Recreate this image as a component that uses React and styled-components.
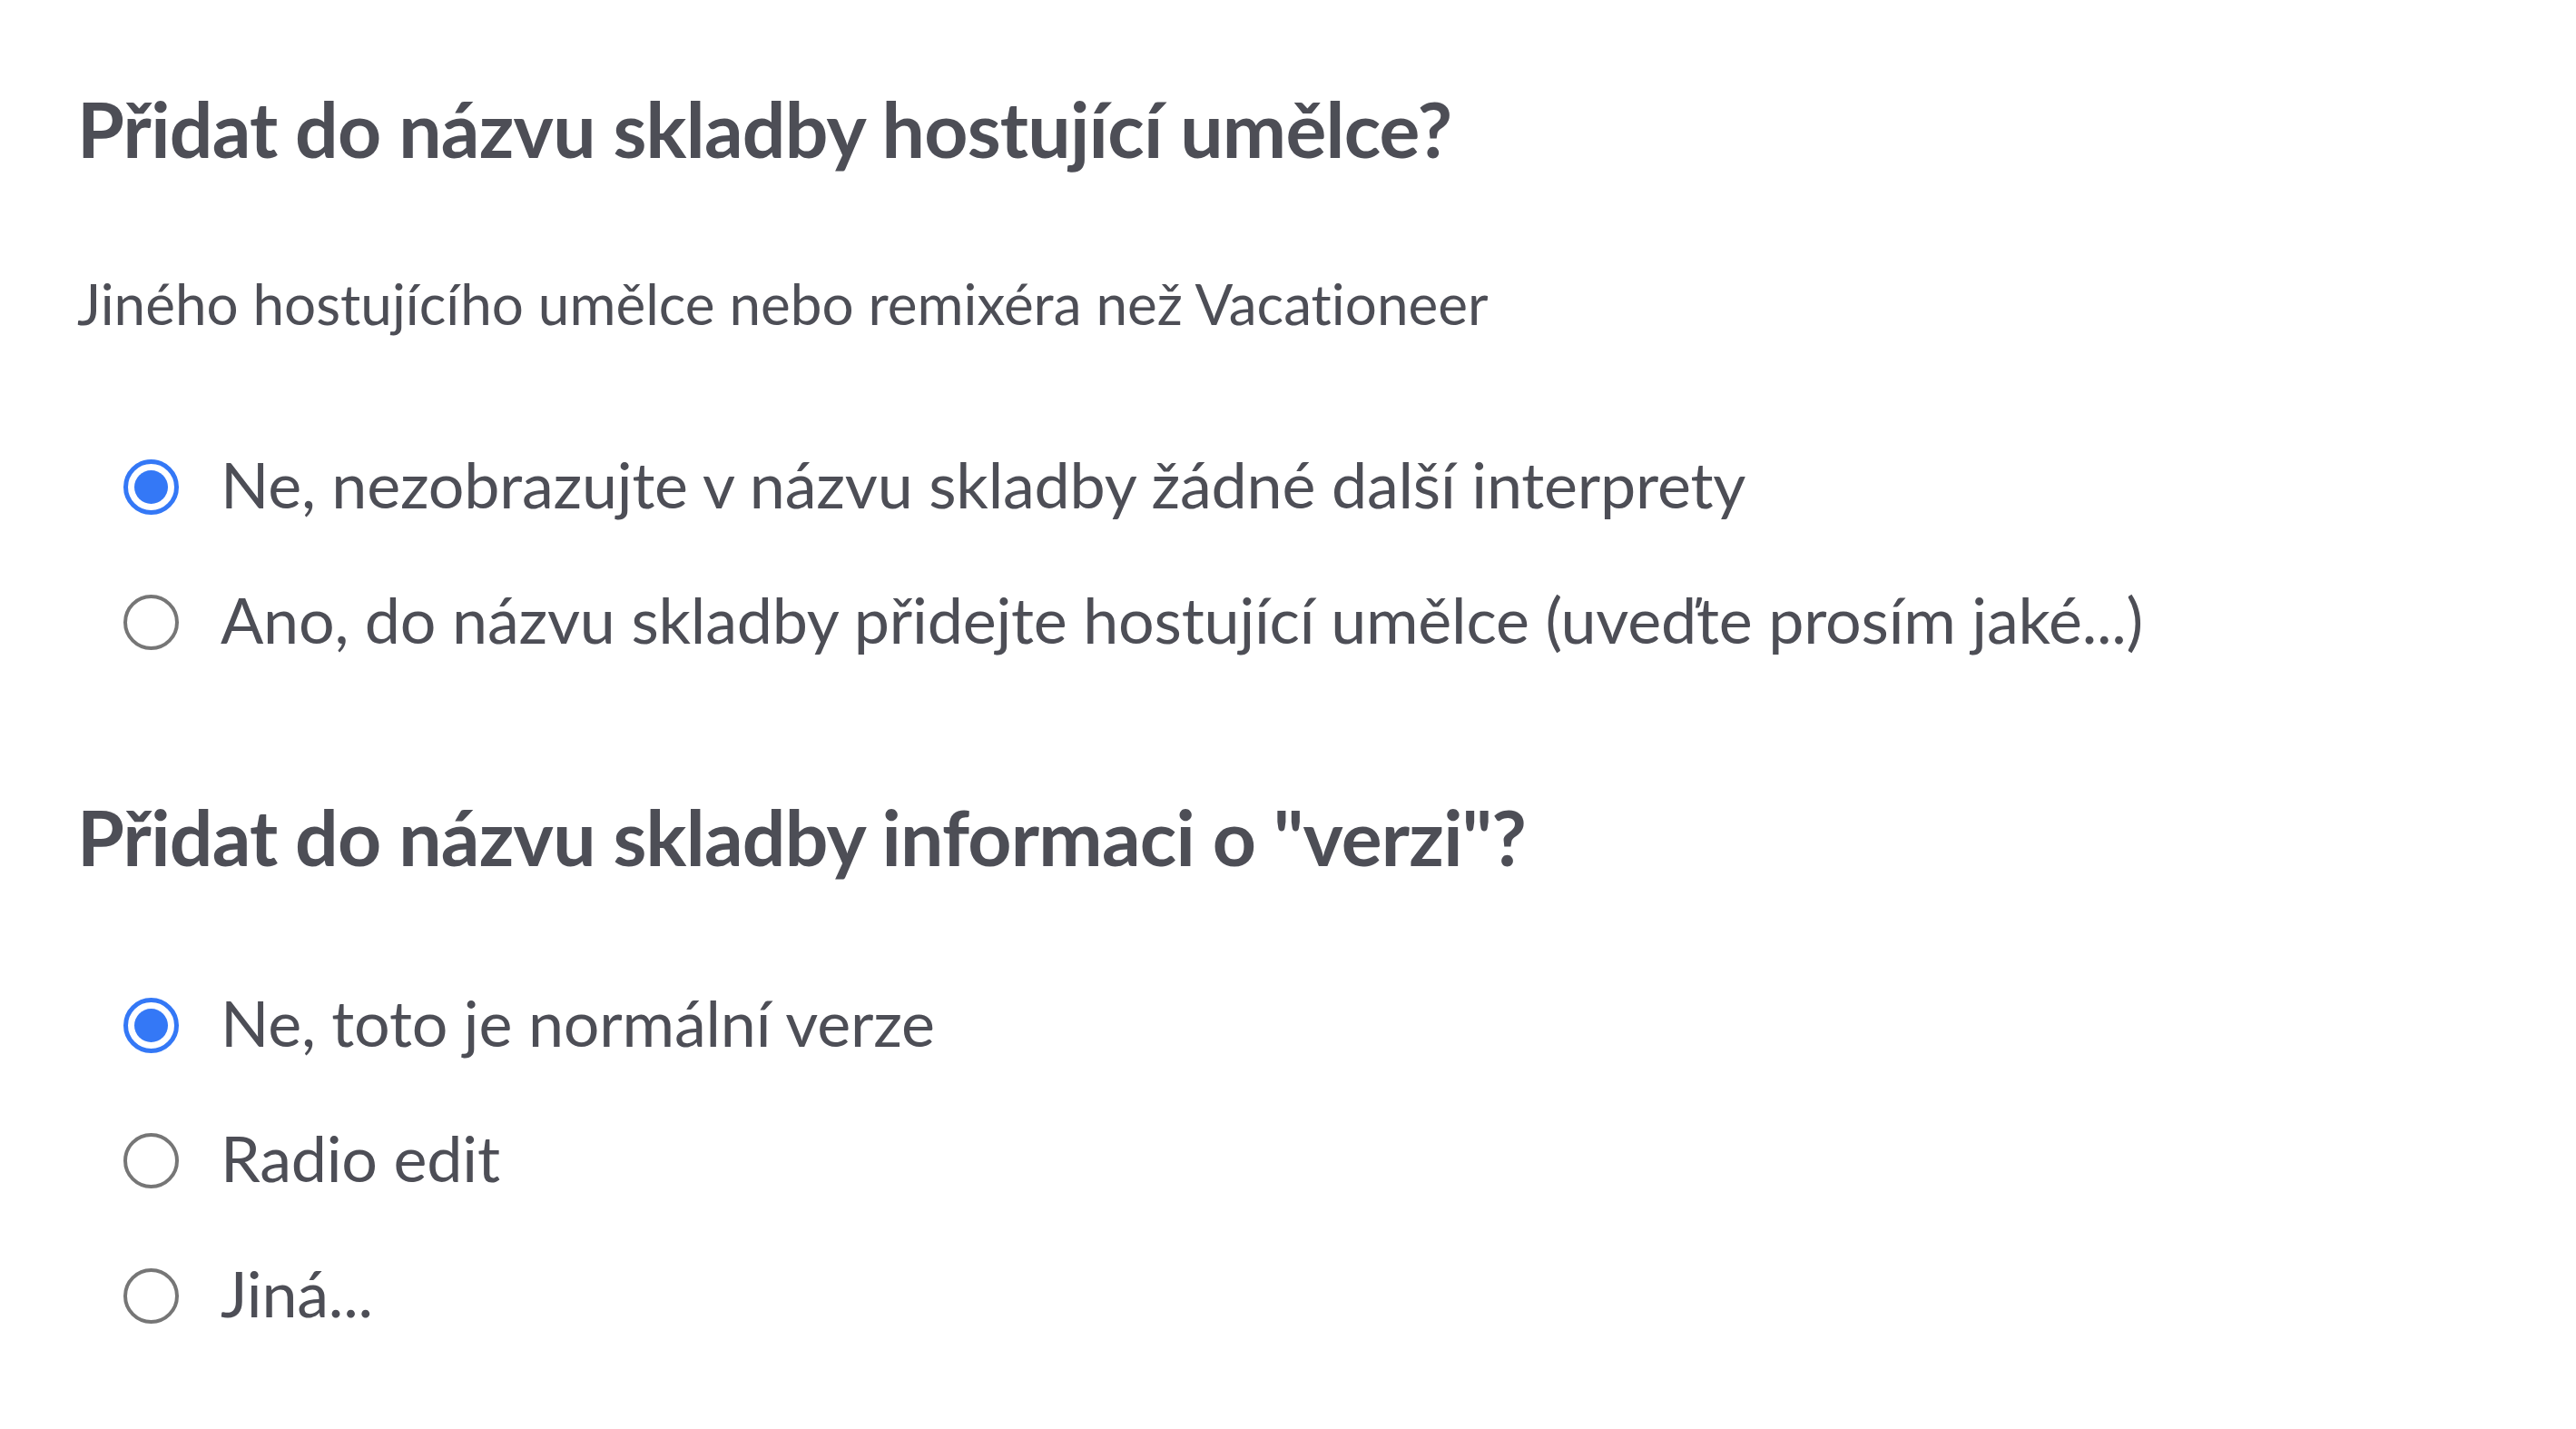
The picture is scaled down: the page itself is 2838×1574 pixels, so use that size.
import React, { useState } from 'react';
import styled, { createGlobalStyle } from 'styled-components';

const GlobalStyle = createGlobalStyle`
  html, body {
    margin: 0;
    padding: 0;
    background: #fff;
  }

  body {
    font-family: Lato, 'Noto Sans', sans-serif;
    font-variant-ligatures: none;
    color: #4d4e56;
  }
`;

const guestOptions = [
  'Ne, nezobrazujte v názvu skladby žádné další interprety',
  'Ano, do názvu skladby přidejte hostující umělce (uveďte prosím jaké...)',
];

const versionOptions = ['Ne, toto je normální verze', 'Radio edit', 'Jiná...'];

const RadioGroup = ({ name, options, value, onChange, top }) => (
  <OptionList $top={top}>
    {options.map((label, i) => (
      <Option key={label}>
        <HiddenInput
          type="radio"
          name={name}
          checked={value === i}
          onChange={() => onChange(i)}
        />
        <Radio $checked={value === i} />
        <span>{label}</span>
      </Option>
    ))}
  </OptionList>
);

const App = () => {
  const [guest, setGuest] = useState(0);
  const [version, setVersion] = useState(0);

  return (
    <>
      <GlobalStyle />
      <Form>
        <Title>Přidat do názvu skladby hostující umělce?</Title>
        <Hint>Jiného hostujícího umělce nebo remixéra než Vacationeer</Hint>
        <RadioGroup
          name="guest"
          options={guestOptions}
          value={guest}
          onChange={setGuest}
          top={120}
        />

        <Title $top={148}>Přidat do názvu skladby informaci o "verzi"?</Title>
        <RadioGroup
          name="version"
          options={versionOptions}
          value={version}
          onChange={setVersion}
          top={111}
        />
      </Form>
    </>
  );
};

const Form = styled.div`
  display: flex;
  flex-direction: column;
  align-items: flex-start;
  padding: 92px 0 120px 85px;
`;

const Title = styled.h2`
  margin: ${({ $top }) => $top || 0}px 0 0;
  font-size: 84px;
  line-height: 1.2;
  font-weight: 700;
  letter-spacing: -0.75px;
`;

const Hint = styled.p`
  margin: 104px 0 0;
  font-size: 62px;
  line-height: 1.2;
  font-weight: 400;
`;

const OptionList = styled.div`
  display: flex;
  flex-direction: column;
  gap: 65px;
  margin-top: ${({ $top }) => $top}px;
  padding-left: 51px;
`;

const Option = styled.label`
  display: flex;
  align-items: flex-start;
  gap: 46px;
  font-size: 70px;
  line-height: 84px;
  letter-spacing: -0.2px;
  cursor: pointer;
`;

const HiddenInput = styled.input`
  position: absolute;
  opacity: 0;
  width: 0;
  height: 0;
  margin: 0;
`;

const Radio = styled.span`
  flex: none;
  position: relative;
  box-sizing: border-box;
  width: 61px;
  height: 61px;
  margin-top: 15px;
  border-radius: 50%;
  border: ${({ $checked }) =>
    $checked ? '5px solid #3478f6' : '4px solid #767676'};

  &::after {
    content: '';
    position: absolute;
    inset: 7px;
    border-radius: 50%;
    background: #3478f6;
    display: ${({ $checked }) => ($checked ? 'block' : 'none')};
  }
`;

export default App;
